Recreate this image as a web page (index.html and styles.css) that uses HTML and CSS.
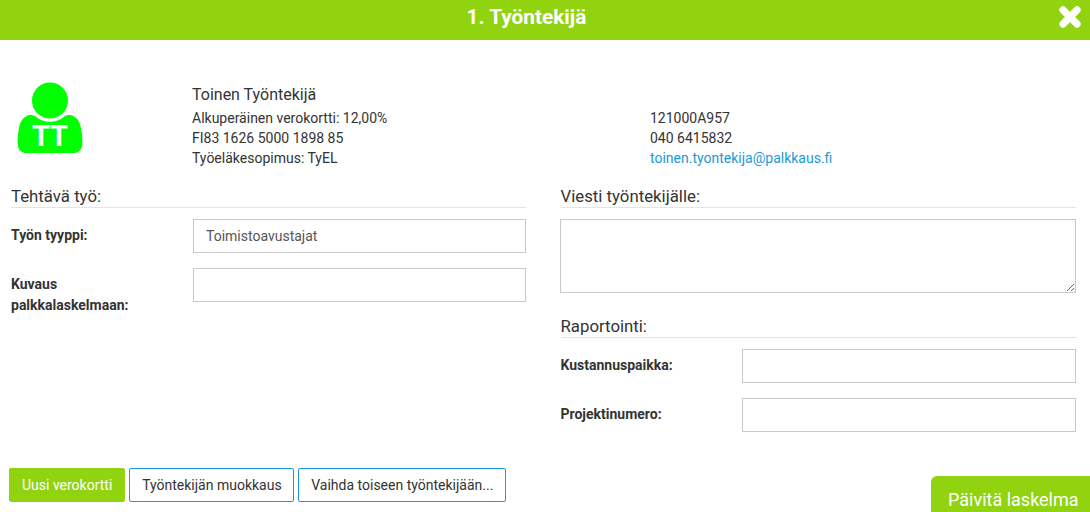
FILE: index.html
```html
<!DOCTYPE html>
<html lang="fi">
<head>
<meta charset="utf-8">
<title>1. Työntekijä</title>
<link rel="stylesheet" href="styles.css">
</head>
<body>
<header class="topbar">
  <h1 class="topbar-title">1. Työntekijä</h1>
  <svg class="close-icon" width="22" height="22" viewBox="0 0 22 22" aria-hidden="true"><path d="M4 4 18 18M18 4 4 18" stroke="#fff" stroke-width="7.4" stroke-linecap="round" fill="none"/></svg>
</header>
<section class="employee">
  <div class="avatar-col">
    <div class="avatar">
      <svg width="66" height="72" viewBox="0 0 66 72" aria-hidden="true">
        <circle cx="33" cy="18.500" r="18" fill="#00ff00"/>
        <path d="M13 33C6 34 3 40 1.800 47C.5 55 0 61 1.200 65C2.200 69 6 71 10 71H56C60 71 63.800 69 64.800 65C66 61 65.500 55 64.200 47C63 40 60 34 53 33C51 33 49.500 33.200 48 34C44 37.500 39 39.800 33 39.800C27 39.800 22 37.500 18 34C16.500 33.200 15 33 13 33Z" fill="#00ff00"/>
      </svg>
      <span class="avatar-initials">TT</span>
    </div>
  </div>
  <div class="info-col">
    <div class="employee-name">Toinen Työntekijä</div>
    <div class="info-line">Alkuperäinen verokortti: 12,00%</div>
    <div class="info-line">FI83 1626 5000 1898 85</div>
    <div class="info-line">Työeläkesopimus: TyEL</div>
  </div>
  <div class="contact-col">
    <div class="info-line">121000A957</div>
    <div class="info-line">040 6415832</div>
    <div class="info-line"><a class="mail" href="#">toinen.tyontekija@palkkaus.fi</a></div>
  </div>
</section>
<main class="form-grid">
  <section class="form-col">
    <h2 class="section-title">Tehtävä työ:</h2>
    <div class="field field-left">
      <label class="field-label">Työn tyyppi:</label>
      <input class="text-input" type="text" value="Toimistoavustajat">
    </div>
    <div class="field field-left">
      <label class="field-label">Kuvaus palkkalaskelmaan:</label>
      <input class="text-input" type="text">
    </div>
  </section>
  <section class="form-col">
    <h2 class="section-title">Viesti työntekijälle:</h2>
    <textarea class="message"></textarea>
    <h2 class="section-title section-report">Raportointi:</h2>
    <div class="field field-right">
      <label class="field-label">Kustannuspaikka:</label>
      <input class="text-input" type="text">
    </div>
    <div class="field field-right">
      <label class="field-label">Projektinumero:</label>
      <input class="text-input" type="text">
    </div>
  </section>
</main>
<footer class="actions">
  <div class="action-group">
    <button class="btn btn-green">Uusi verokortti</button>
    <button class="btn btn-outline">Työntekijän muokkaus</button>
    <button class="btn btn-outline">Vaihda toiseen työntekijään...</button>
  </div>
  <button class="update-btn">Päivitä laskelma</button>
</footer>
</body>
</html>
```
FILE: styles.css
```css
* { box-sizing: border-box; }
html, body { margin: 0; padding: 0; }
body {
  width: 1090px;
  height: 512px;
  overflow: hidden;
  background: #fff;
  color: #333;
  font-family: Roboto, "Liberation Sans", sans-serif;
  font-size: 14px;
}
.topbar {
  height: 40px;
  background: #92d30f;
  position: relative;
  display: flex;
  align-items: center;
  justify-content: center;
  padding-right: 37px;
}
.topbar-title {
  margin: 0 0 6px 0;
  color: #fff;
  font-size: 20.8px;
  font-weight: 700;
}
.close-icon { position: absolute; left: 1059px; top: 6px; }
.employee {
  display: flex;
  padding-top: 45px;
  height: 143px;
}
.avatar-col { width: 192px; padding-left: 17px; }
.avatar { position: relative; width: 66px; height: 72px; margin-top: -3px; }
.avatar svg { display: block; }
.avatar-initials {
  position: absolute;
  left: 0;
  right: 0;
  top: 37px;
  text-align: center;
  color: #fff;
  font-size: 29px;
  font-weight: 700;
  line-height: 34px;
}
.info-col { width: 458px; }
.employee-name { font-size: 16px; line-height: 20px; margin-bottom: 3px; }
.info-line { line-height: 20px; }
.contact-col { padding-top: 23px; }
.mail { color: #1a9ad6; text-decoration: none; }
.form-grid {
  display: grid;
  grid-template-columns: 515px 515.5px;
  column-gap: 34.5px;
  padding-left: 11px;
  height: 285px;
}
.section-title {
  margin: 0;
  font-size: 16.8px;
  font-weight: 400;
  line-height: 20px;
  height: 25px;
  padding-top: 3px;
  border-bottom: 1px solid #e4e4e4;
}
.section-report { margin-top: 20px; }
.field { display: flex; margin-top: 11px; height: 38px; }
.field-label {
  font-weight: 700;
  font-size: 14px;
  line-height: 21px;
  padding-top: 6px;
}
.field-left .field-label { width: 182px; padding-right: 30px; flex: none; }
.field-right .field-label { width: 181.5px; flex: none; }
.text-input {
  flex: 1;
  height: 34px;
  border: 1px solid #c8c8c8;
  padding: 0 12px;
  font: 14px Roboto, "Liberation Sans", sans-serif;
  color: #555;
  background: #fff;
  border-radius: 0;
  outline: none;
}
.message {
  display: block;
  width: 516px;
  margin: 11px 0 0 -0.5px;
  height: 74px;
  border: 1px solid #c8c8c8;
  background: #fff;
  border-radius: 0;
  outline: none;
}
.actions {
  display: flex;
  justify-content: space-between;
  align-items: flex-start;
  padding-left: 9px;
}
.action-group { display: flex; gap: 4px; }
.btn {
  height: 34px;
  padding: 0 12px;
  font: 14px Roboto, "Liberation Sans", sans-serif;
  border-radius: 2px;
  cursor: pointer;
}
.btn-green { background: #92d30f; border: 1px solid #92d30f; color: #fff; }
.btn-outline { background: #fff; border: 1px solid #1a9ad6; color: #333; padding: 0 11.8px; }
.update-btn {
  width: 159px;
  height: 46px;
  margin-top: 8px;
  padding: 0 0 0 17px;
  text-align: left;
  background: #92d30f;
  color: #fff;
  border: 0;
  border-radius: 6px 0 0 0;
  font: 18px Roboto, "Liberation Sans", sans-serif;
}
```
